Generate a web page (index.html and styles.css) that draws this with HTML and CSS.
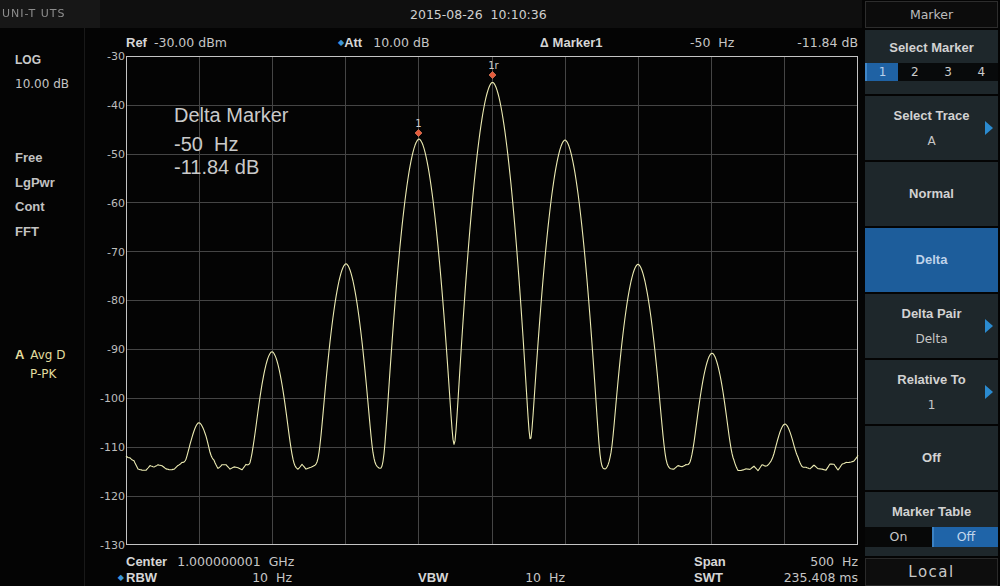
FILE: index.html
```html
<!DOCTYPE html>
<html>
<head>
<meta charset="utf-8">
<title>Spectrum Analyzer - Marker</title>
<link rel="stylesheet" href="styles.css">
</head>
<body>
<div class="screen">
  <div class="main">
    <div class="topbar">
      <div class="logo">UNI-T UTS</div>
      <div class="datetime">2015-08-26&nbsp;&nbsp;10:10:36</div>
    </div>
    <div class="content">
      <div class="left">
        <div class="grp1">
          <div class="lbold">LOG</div>
          <div class="lval">10.00 dB</div>
        </div>
        <div class="grp2">
          <div>Free</div>
          <div>LgPwr</div>
          <div>Cont</div>
          <div>FFT</div>
        </div>
        <div class="grp3">
          <div><span class="ta">A</span> Avg D</div>
          <div class="pp">P-PK</div>
        </div>
      </div>
      <div class="plot">
        <div class="header">
          <div class="h1"><span class="lb">Ref</span><span class="hv">-30.00 dBm</span></div>
          <div class="h2"><span class="dia">◆</span><span class="lb">Att</span><span class="hv">10.00 dB</span></div>
          <div class="h3"><span class="delta-sym">Δ</span> <span class="lb">Marker1</span></div>
          <div class="h4">-50&nbsp;&nbsp;Hz</div>
          <div class="h5">-11.84 dB</div>
        </div>
        <svg class="chart" width="777" height="504" viewBox="85 50 777 504" xmlns="http://www.w3.org/2000/svg">
          <g class="grid">
            <line x1="199.5" y1="56" x2="199.5" y2="545"/>
            <line x1="272.5" y1="56" x2="272.5" y2="545"/>
            <line x1="345.5" y1="56" x2="345.5" y2="545"/>
            <line x1="418.5" y1="56" x2="418.5" y2="545"/>
            <line x1="492.5" y1="56" x2="492.5" y2="545"/>
            <line x1="565.5" y1="56" x2="565.5" y2="545"/>
            <line x1="638.5" y1="56" x2="638.5" y2="545"/>
            <line x1="711.5" y1="56" x2="711.5" y2="545"/>
            <line x1="784.5" y1="56" x2="784.5" y2="545"/>
            <line x1="126" y1="105.5" x2="858" y2="105.5"/>
            <line x1="126" y1="154.5" x2="858" y2="154.5"/>
            <line x1="126" y1="202.5" x2="858" y2="202.5"/>
            <line x1="126" y1="251.5" x2="858" y2="251.5"/>
            <line x1="126" y1="300.5" x2="858" y2="300.5"/>
            <line x1="126" y1="349.5" x2="858" y2="349.5"/>
            <line x1="126" y1="398.5" x2="858" y2="398.5"/>
            <line x1="126" y1="447.5" x2="858" y2="447.5"/>
            <line x1="126" y1="496.5" x2="858" y2="496.5"/>
          </g>
          <rect class="frame" x="126.5" y="56.5" width="731" height="488"/>
          <g class="ylab">
            <text x="125" y="60">-30</text>
            <text x="125" y="109">-40</text>
            <text x="125" y="158">-50</text>
            <text x="125" y="207">-60</text>
            <text x="125" y="256">-70</text>
            <text x="125" y="304">-80</text>
            <text x="125" y="353">-90</text>
            <text x="125" y="402">-100</text>
            <text x="125" y="451">-110</text>
            <text x="125" y="500">-120</text>
            <text x="125" y="549">-130</text>
          </g>
          <path id="trace" class="trace" d=""/>
          <g class="marks">
            <polygon class="mk" points="418.5,129.5 422,133 418.5,136.5 415,133"/>
            <text class="mkl" x="418.5" y="127">1</text>
            <polygon class="mk" points="492.5,71.5 496,75 492.5,78.5 489,75"/>
            <text class="mkl" x="493.5" y="69">1r</text>
          </g>
        </svg>
        <div class="delta">
          <div class="d1">Delta Marker</div>
          <div>-50&nbsp;&nbsp;Hz</div>
          <div>-11.84 dB</div>
        </div>
        <div class="footer">
          <div class="frow">
            <div></div>
            <div class="span4"><span class="lb">Center</span><span class="fv">1.000000001&nbsp;&nbsp;GHz</span></div>
            <div class="pair"><span class="lb">Span</span><span class="fv">500&nbsp;&nbsp;Hz</span></div>
          </div>
          <div class="frow">
            <div class="fdia">◆</div>
            <div class="pair"><span class="lb">RBW</span><span class="fv">10&nbsp;&nbsp;Hz</span></div>
            <div></div>
            <div class="pair"><span class="lb">VBW</span><span class="fv">10&nbsp;&nbsp;Hz</span></div>
            <div></div>
            <div class="pair"><span class="lb">SWT</span><span class="fv">235.408 ms</span></div>
          </div>
        </div>
      </div>
    </div>
  </div>
  <div class="menu">
    <div class="mhead">Marker</div>
    <div class="btn sel">
      <div class="t">Select Marker</div>
      <div class="tabs">
        <div class="tab on">1</div>
        <div class="tab">2</div>
        <div class="tab">3</div>
        <div class="tab">4</div>
      </div>
    </div>
    <div class="btn">
      <div class="t">Select Trace</div>
      <div class="v">A</div>
      <div class="arrow"></div>
    </div>
    <div class="btn">
      <div class="t">Normal</div>
    </div>
    <div class="btn active">
      <div class="t">Delta</div>
    </div>
    <div class="btn">
      <div class="t">Delta Pair</div>
      <div class="v">Delta</div>
      <div class="arrow"></div>
    </div>
    <div class="btn">
      <div class="t">Relative To</div>
      <div class="v">1</div>
      <div class="arrow"></div>
    </div>
    <div class="btn">
      <div class="t">Off</div>
    </div>
    <div class="btn mtable">
      <div class="t">Marker Table</div>
      <div class="toggle">
        <div class="opt">On</div>
        <div class="opt on">Off</div>
      </div>
    </div>
    <div class="local">Local</div>
  </div>
</div>
<script src="script.js"></script>
</body>
</html>
```

FILE: styles.css
```css
* { box-sizing: border-box; margin: 0; padding: 0; }
html, body { background: #000; }
body {
  width: 1000px;
  height: 586px;
  overflow: hidden;
  font-family: "DejaVu Sans", sans-serif;
  color: #c4c4c4;
}
.screen { display: flex; width: 1000px; height: 586px; background: #040404; }
.main { width: 862px; display: flex; flex-direction: column; }

.topbar { height: 28px; background: #0f0f0f; display: flex; align-items: center; }
.logo {
  width: 100px; height: 28px; background: #171717; color: #8d8d8d;
  font: 11px/28px "DejaVu Sans", sans-serif; padding-left: 2px; letter-spacing: 1px;
  filter: blur(0.6px);
}
.datetime { margin-left: 310px; font-size: 12.5px; color: #d0d0d0; }

.content { flex: 1; display: flex; }
.left { width: 85px; border-right: 1px solid #191919; padding: 20px 0 0 15px; }
.lbold { font: bold 12px/24px "Liberation Sans", sans-serif; color: #cacaca; }
.lval { font-size: 12px; line-height: 24px; color: #c4c4c4; }
.grp2 { margin-top: 50px; font: bold 13px/24.5px "Liberation Sans", sans-serif; color: #c2c2c2; }
.grp3 { margin-top: 102px; color: #e2dc9e; font-size: 12px; line-height: 19px; }
.ta { font: bold 13px "Liberation Sans", sans-serif; margin-right: 2px; }
.pp { padding-left: 15px; }

.plot { flex: 1; position: relative; display: flex; flex-direction: column; }
.header {
  height: 22px; display: flex; padding: 8px 0 0 41px;
  font-size: 12.5px; line-height: 14px; color: #c6c6c6;
}
.lb { font: bold 13px/14px "Liberation Sans", sans-serif; color: #d6d6d6; }
.h1 { width: 212px; }
.h2 { width: 202px; }
.h3 { width: 150px; }
.h4 { flex: 1; }
.h5 { padding-right: 4px; }
.hv { margin-left: 7px; }
.h2 .hv { margin-left: 11px; }
.dia { color: #3d95d8; font-size: 8px; vertical-align: 2px; }
.delta-sym { font: bold 12px "Liberation Sans", sans-serif; color: #d6d6d6; }

.chart { display: block; width: 777px; height: 504px; }
.grid line { stroke: #454545; stroke-width: 1; }
.frame { fill: none; stroke: #c4c4c4; stroke-width: 1; }
.ylab text { font: 11px "DejaVu Sans", sans-serif; fill: #bdbdbd; text-anchor: end; }
.trace { fill: none; stroke: #ecebb2; stroke-width: 1.1; stroke-linejoin: round; }
.mk { fill: #e65c3c; stroke: #f08a6a; stroke-width: 0.6; }
.mkl { font: 10px "DejaVu Sans", sans-serif; fill: #cfcfcf; text-anchor: middle; }

.delta {
  position: absolute; top: 76px; left: 89px;
  font: 20px/23px "Liberation Sans", sans-serif; color: #cacaca;
}
.d1 { margin-bottom: 6px; }

.frow {
  display: grid;
  grid-template-columns: 41px 166px 126px 147px 129px 164px;
  height: 16px; line-height: 16px; font-size: 12.5px; color: #c6c6c6;
}
.frow .lb { line-height: 16px; }
.span4 { grid-column: 2 / 6; }
.span4 .fv { margin-left: 10px; }
.pair { display: flex; justify-content: space-between; }
.fdia { text-align: right; padding-right: 2px; color: #3d95d8; font-size: 8px; }

.menu {
  width: 138px; padding: 1px 2px 0 3px;
  display: flex; flex-direction: column; gap: 2px; background: #040404;
}
.mhead {
  height: 27px; border: 1px solid #2d2d2d; background: #0c0c0c;
  text-align: center; font-size: 12.5px; line-height: 25px; color: #bcbcbc;
}
.btn {
  height: 64px; background: #1e272b; position: relative;
  display: flex; flex-direction: column; align-items: center; justify-content: center; gap: 9px;
}
.btn .t { font: bold 13px/16px "Liberation Sans", sans-serif; color: #d2d2d2; }
.btn .v { font-size: 12px; line-height: 16px; color: #c6c6c6; }
.btn.active { background: #1d5d9b; }
.btn.active .t { color: #bfd3ea; }
.arrow {
  position: absolute; right: 5px; top: 50%; margin-top: -7px; width: 0; height: 0;
  border-left: 8px solid #2b8bd0; border-top: 7px solid transparent; border-bottom: 7px solid transparent;
}
.btn.sel { justify-content: flex-start; padding-top: 10px; gap: 7px; }
.tabs { width: 100%; height: 18px; display: grid; grid-template-columns: repeat(4, 1fr); background: #080a0b; }
.tab { font-size: 12px; line-height: 18px; text-align: center; color: #cccccc; }
.tab.on { background: #1f62a4; border-left: 2px solid #3f86c8; color: #b9d0ea; }
.btn.mtable { justify-content: flex-start; padding-top: 12px; gap: 7px; }
.toggle { width: 100%; height: 20px; display: grid; grid-template-columns: 67px 1fr; }
.opt { font-size: 12.5px; line-height: 20px; text-align: center; background: #070808; color: #c8c8c8; }
.opt.on { background: #1f64a8; color: #c2d6ec; border-left: 2px solid #3b82c4; }
.local {
  height: 28px; background: #0d0d0d; border: 1px solid #2a2a2a;
  text-align: center; font-size: 15px; line-height: 26px; letter-spacing: 1.5px; color: #c8c8c8;
}
```

FILE: script.js
```js
(function () {
  var peaks = [
    [199, -105.5], [272, -90.5], [346, -72.5], [419, -47], [492.5, -35.4],
    [565, -47.2], [638, -72.6], [712, -90.8], [785, -105.8]
  ];
  var seed = 12345;
  function rnd() { seed = (seed * 16807) % 2147483647; return seed / 2147483647; }
  var knots = [];
  for (var i = 0; i <= 200; i++) knots.push(rnd() * 2 - 1);
  function noise(x) {
    var t = (x - 126) / 4;
    var i0 = Math.floor(t), f = t - i0;
    return knots[i0] * (1 - f) + knots[Math.min(i0 + 1, knots.length - 1)] * f;
  }
  var d = '';
  for (var x = 126; x <= 858; x += 1) {
    var fl = -114.2 + 0.7 * noise(x) + 3 * Math.exp(-(x - 126) / 6) + 2.5 * Math.exp(-(858 - x) / 8);
    var p = Math.pow(10, fl / 10);
    for (var k = 0; k < peaks.length; k++) {
      var dx = Math.abs(x - peaks[k][0]);
      var drop = 0.1 * Math.pow(dx, 1.83);
      p += Math.pow(10, (peaks[k][1] - drop) / 10);
    }
    var v = 10 * Math.log10(p);
    var y = 56 + (-30 - v) * 4.89;
    d += (x === 126 ? 'M' : 'L') + x + ' ' + y.toFixed(1);
  }
  document.getElementById('trace').setAttribute('d', d);
})();
```
